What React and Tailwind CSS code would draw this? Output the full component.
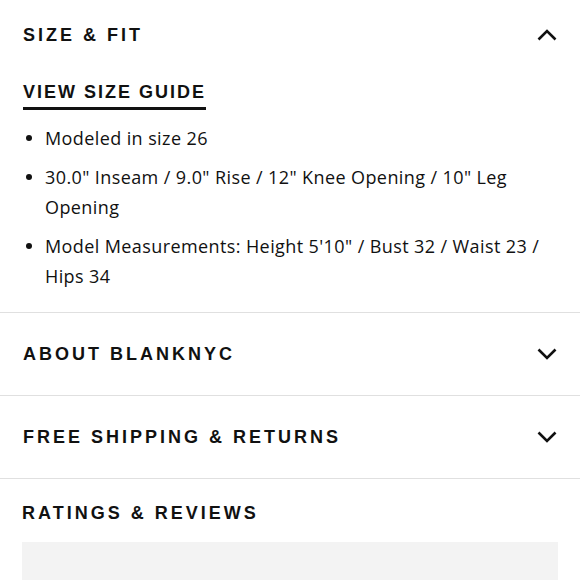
import React from "react";

const Chevron = ({ up }) => (
  <svg width="20" height="12" viewBox="0 0 20 12" fill="none" className="shrink-0">
    <path
      d={up ? "M1.5 10.5L10 2l8.5 8.5" : "M1.5 1.5L10 10l8.5-8.5"}
      stroke="#111"
      strokeWidth="2.6"
    />
  </svg>
);

const heading = "font-['Liberation_Sans',Arial,sans-serif] font-bold text-[18px] leading-6 tracking-[3px] text-[#111]";

const items = [
  "Modeled in size 26",
  "30.0\" Inseam / 9.0\" Rise / 12\" Knee Opening / 10\" Leg Opening",
  "Model Measurements: Height 5'10\" / Bust 32 / Waist 23 / Hips 34",
];

const Row = ({ title }) => (
  <div className="flex items-center justify-between border-t border-[#e0e0e0] pl-[23px] pr-[23px] pt-[29px] pb-[29px]">
    <span className={heading}>{title}</span>
    <Chevron />
  </div>
);

export default function App() {
  return (
    <div className="w-[580px] h-[580px] overflow-hidden bg-white">
      <div className="px-[23px] pt-[23px] pb-[21px]">
        <div className="flex items-center justify-between">
          <span className={heading}>SIZE &amp; FIT</span>
          <Chevron up />
        </div>
        <div className="mt-[33px]">
          <span className="font-['Liberation_Sans',Arial,sans-serif] font-bold text-[18px] leading-6 tracking-[2px] text-[#111] inline-block border-b-[3px] border-[#111] pb-[3px]">
            VIEW SIZE GUIDE
          </span>
        </div>
        <ul className="mt-[13px] flex flex-col gap-[9px] font-['Open_Sans',sans-serif] text-[18px] tracking-[0.4px] leading-[30px] text-[#111]">
          {items.map((t) => (
            <li key={t} className="flex">
              <span className="w-[22px] shrink-0 flex pt-[12px] pl-[3px]">
                <span className="w-[6px] h-[6px] rounded-full bg-[#111]" />
              </span>
              <span>{t}</span>
            </li>
          ))}
        </ul>
      </div>
      <Row title="ABOUT BLANKNYC" />
      <Row title="FREE SHIPPING & RETURNS" />
      <div className="border-t border-[#e0e0e0] px-[22px] pt-[22px]">
        <div className={heading}>RATINGS &amp; REVIEWS</div>
        <div className="mt-[17px] h-[60px] bg-[#f3f3f3]" />
      </div>
    </div>
  );
}
